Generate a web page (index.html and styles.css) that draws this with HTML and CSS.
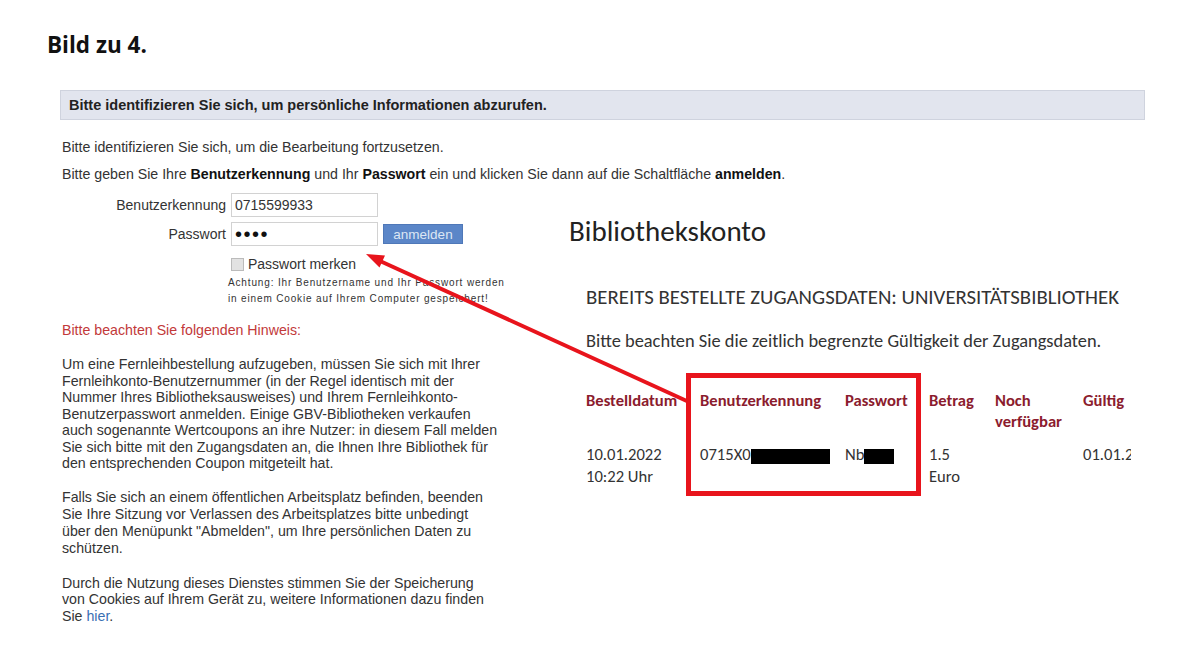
FILE: index.html
```html
<!DOCTYPE html>
<html lang="de">
<head>
    <meta charset="UTF-8">
    <meta name="viewport" content="width=device-width, initial-scale=1.0">
    <title>Bild zu 4.</title>
    <link rel="stylesheet" href="styles.css">
</head>
<body>
    <div class="page">
        <h1 class="fig-title">Bild zu 4.</h1>

        <div class="shot">
            <div class="shot-head">Bitte identifizieren Sie sich, um persönliche Informationen abzurufen.</div>

            <div class="shot-row">
                <!-- Login-Seite -->
                <div class="login">
                    <p class="intro">Bitte identifizieren Sie sich, um die Bearbeitung fortzusetzen.</p>
                    <p class="intro intro-2">Bitte geben Sie Ihre <b>Benutzerkennung</b> und Ihr <b>Passwort</b> ein und klicken Sie dann auf die Schaltfläche <b>anmelden</b>.</p>

                    <form class="login-form" onsubmit="return false">
                        <label class="form-label" for="user">Benutzerkennung</label>
                        <input class="form-input" id="user" type="text" value="0715599933">
                        <span></span>

                        <label class="form-label" for="pass">Passwort</label>
                        <input class="form-input form-pass" id="pass" type="password" value="abcd">
                        <button class="btn-login" type="submit">anmelden</button>

                        <span></span>
                        <div class="remember">
                            <span class="checkbox"></span>
                            <span>Passwort merken</span>
                        </div>
                        <span></span>

                        <span></span>
                        <p class="remember-note">Achtung: Ihr Benutzername und Ihr Passwort werden<br>in einem Cookie auf Ihrem Computer gespeichert!</p>
                    </form>

                    <p class="hint-title">Bitte beachten Sie folgenden Hinweis:</p>

                    <p class="text">Um eine Fernleihbestellung aufzugeben, müssen Sie sich mit Ihrer Fernleihkonto-Benutzernummer (in der Regel identisch mit der Nummer Ihres Bibliotheksausweises) und Ihrem Fernleihkonto-Benutzerpasswort anmelden. Einige GBV-Bibliotheken verkaufen auch sogenannte Wertcoupons an ihre Nutzer: in diesem Fall melden Sie sich bitte mit den Zugangsdaten an, die Ihnen Ihre Bibliothek für den entsprechenden Coupon mitgeteilt hat.</p>

                    <p class="text text-mid">Falls Sie sich an einem öffentlichen Arbeitsplatz befinden, beenden Sie Ihre Sitzung vor Verlassen des Arbeitsplatzes bitte unbedingt über den Menüpunkt "Abmelden", um Ihre persönlichen Daten zu schützen.</p>

                    <p class="text">Durch die Nutzung dieses Dienstes stimmen Sie der Speicherung von Cookies auf Ihrem Gerät zu, weitere Informationen dazu finden Sie <a href="#" class="link">hier</a>.</p>
                </div>

                <!-- Bibliothekskonto -->
                <div class="konto">
                    <h2 class="konto-title">Bibliothekskonto</h2>
                    <h3 class="konto-sub">BEREITS BESTELLTE ZUGANGSDATEN: UNIVERSITÄTSBIBLIOTHEK</h3>
                    <p class="konto-note">Bitte beachten Sie die zeitlich begrenzte Gültigkeit der Zugangsdaten.</p>

                    <div class="konto-table">
                        <div class="th">Bestelldatum</div>
                        <div class="th">Benutzerkennung</div>
                        <div class="th">Passwort</div>
                        <div class="th">Betrag</div>
                        <div class="th">Noch<br>verfügbar</div>
                        <div class="th">Gültig</div>

                        <div class="td">10.01.2022<br>10:22 Uhr</div>
                        <div class="td">0715X0<span class="redact redact-user"></span></div>
                        <div class="td">Nb<span class="redact redact-pass"></span></div>
                        <div class="td">1.5<br>Euro</div>
                        <div class="td"></div>
                        <div class="td">01.01.2023</div>

                        <div class="mark-box"></div>
                    </div>
                </div>
            </div>
        </div>

        <svg class="arrow" width="1200" height="667" viewBox="0 0 1200 667">
            <line x1="380" y1="261" x2="689" y2="402" stroke="#e8141c" stroke-width="4"/>
            <polygon points="366,254 379.5,267.5 385,255.5" fill="#e8141c"/>
        </svg>
    </div>
</body>
</html>
```

FILE: styles.css
```css
* {
    margin: 0;
    padding: 0;
    box-sizing: border-box;
}

body {
    background: #fff;
    font-family: 'Liberation Sans', Arial, sans-serif;
    color: #333;
}

.page {
    position: relative;
    width: 1200px;
    height: 667px;
    overflow: hidden;
    padding: 33px 0 0 47px;
}

.fig-title {
    font-family: 'Open Sans', 'Noto Sans', sans-serif;
    font-size: 22.5px;
    font-weight: 700;
    line-height: 24px;
    color: #111;
}

.shot {
    margin: 33px 0 0 13px;
    width: 1085px;
}

.shot-head {
    height: 30px;
    line-height: 28px;
    padding-left: 8px;
    background: #e2e5ee;
    border: 1px solid #cfd3de;
    font-size: 14.5px;
    font-weight: 700;
    color: #222;
}

.shot-row {
    display: flex;
}

/* Login page */

.login {
    flex: 0 0 509px;
    min-width: 0;
    padding: 19px 0 0 2px;
    font-size: 14.2px;
}

.intro {
    line-height: 16px;
}

.intro-2 {
    margin-top: 11px;
    white-space: nowrap;
}

.intro b {
    color: #111;
}

.login-form {
    display: grid;
    grid-template-columns: 164px 147px 80px;
    column-gap: 5px;
    row-gap: 5px;
    align-items: center;
    margin-top: 11px;
}

.form-label {
    text-align: right;
    font-size: 14px;
    color: #333;
}

.form-input {
    height: 24px;
    border: 1px solid #d2d2d2;
    padding: 0 3px;
    font-family: inherit;
    font-size: 14px;
    color: #333;
    outline: none;
}

.form-pass {
    font-size: 20px;
    letter-spacing: 1.5px;
    color: #111;
}

.btn-login {
    height: 20px;
    background: #5b86c8;
    border: 1px solid #4f78b8;
    color: #dde6f4;
    font-family: inherit;
    font-size: 13.5px;
}

.remember {
    display: flex;
    align-items: center;
    gap: 4px;
    height: 18px;
    margin-top: 4px;
    font-size: 14px;
    color: #333;
    white-space: nowrap;
}

.checkbox {
    width: 13px;
    height: 13px;
    border: 1px solid #bbb;
    background: #e2e2e2;
}

.remember-note {
    grid-column: 2 / 4;
    margin: -3px 0 0 -3px;
    font-size: 10px;
    letter-spacing: 0.85px;
    line-height: 16px;
    white-space: nowrap;
    color: #333;
}

.hint-title {
    margin-top: 15px;
    line-height: 16px;
    color: #c2393a;
}

.text {
    width: 438px;
    margin-top: 17px;
    line-height: 16.5px;
    color: #333;
}

.hint-title + .text {
    margin-top: 18px;
}

.text-mid {
    line-height: 17.3px;
}

.link {
    color: #3a6fb3;
    text-decoration: none;
}

/* Bibliothekskonto */

.konto {
    flex: 0 0 562px;
    min-width: 0;
    overflow: hidden;
    padding-top: 97px;
    font-family: Carlito, Lato, 'Open Sans', sans-serif;
    color: #333;
    white-space: nowrap;
}

.konto-title {
    font-size: 29px;
    font-weight: 400;
    line-height: 28px;
    color: #222;
}

.konto-sub {
    margin: 41px 0 0 17px;
    font-size: 20.8px;
    font-weight: 400;
    line-height: 22px;
    color: #333;
}

.konto-note {
    margin: 22px 0 0 17px;
    font-size: 18.4px;
    line-height: 22px;
}

.konto-table {
    position: relative;
    display: grid;
    grid-template-columns: 114px 145px 84px 66px 88px 120px;
    margin: 38px 0 0 17px;
    font-size: 16.6px;
}

.th {
    font-weight: 700;
    line-height: 21px;
    color: #8b1c2e;
}

.td {
    margin-top: 11px;
    line-height: 22px;
    color: #333;
}

.redact {
    display: inline-block;
    vertical-align: middle;
    height: 15px;
    background: #000;
}

.redact-user {
    width: 79px;
}

.redact-pass {
    width: 30px;
}

.mark-box {
    position: absolute;
    top: -17px;
    left: 100px;
    width: 235px;
    height: 123px;
    border: 5px solid #e8141c;
}

.arrow {
    position: absolute;
    top: 0;
    left: 0;
    pointer-events: none;
}
```
